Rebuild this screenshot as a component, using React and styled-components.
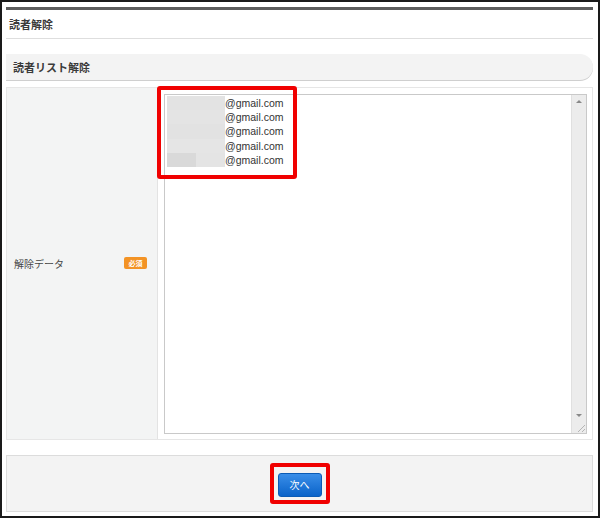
import styled, { createGlobalStyle } from "styled-components";

const GlobalStyle = createGlobalStyle`
  html, body {
    margin: 0;
    padding: 0;
    background: #fff;
  }
  * {
    box-sizing: border-box;
  }
`;

const emails = [
  { id: 1, tone: "#e3e3e3" },
  { id: 2, tone: "#e4e4e4" },
  { id: 3, tone: "#e2e2e2" },
  { id: 4, tone: "#e5e5e5" },
  { id: 5, tone: "#e4e4e4", short: true },
];

function App() {
  return (
    <Frame>
      <GlobalStyle />
      <TopRule />
      <PageTitle>読者解除</PageTitle>
      <SectionHeader>読者リスト解除</SectionHeader>
      <FormRow>
        <LabelCell>
          <span>解除データ</span>
          <Badge>必須</Badge>
        </LabelCell>
        <InputCell>
          <ListBox>
            <ListBody>
              {emails.map(({ id, tone, short }) => (
                <Line key={id}>
                  <Redact tone={tone}>{short && <RedactPart />}</Redact>
                  @gmail.com
                </Line>
              ))}
            </ListBody>
            <ScrollBar>
              <Arrow />
              <Arrow down />
            </ScrollBar>
            <Grip />
          </ListBox>
          <Marker />
        </InputCell>
      </FormRow>
      <Footer>
        <ButtonMark>
          <NextButton type="button">次へ</NextButton>
        </ButtonMark>
      </Footer>
    </Frame>
  );
}
export default App;

const Frame = styled.div`
  width: 600px;
  height: 518px;
  border: 2px solid #1a1a1a;
  padding: 5px 5px 0 4px;
  display: flex;
  flex-direction: column;
  font-family: "Noto Sans CJK JP", "Liberation Sans", sans-serif;
  color: #333;
`;

const TopRule = styled.div`
  height: 3px;
  background: #5c5c5c;
`;

const PageTitle = styled.h1`
  margin: 0;
  height: 29px;
  padding: 0 0 0 3px;
  display: flex;
  align-items: center;
  font-size: 11px;
  font-weight: bold;
  color: #3a3a3a;
  border-bottom: 1px solid #dedede;
`;

const SectionHeader = styled.h2`
  margin: 15px 0 0;
  height: 26px;
  padding: 0 0 0 7px;
  display: flex;
  align-items: center;
  font-size: 11px;
  font-weight: bold;
  color: #3a3a3a;
  background: #f3f3f3;
  border-radius: 0 13px 13px 0;
  box-shadow: 0 1px 0 #cfcfcf;
`;

const FormRow = styled.div`
  margin-top: 7px;
  height: 353px;
  display: flex;
  border: 1px solid #e6e6e6;
`;

const LabelCell = styled.div`
  width: 151px;
  background: #f3f4f4;
  border-right: 1px solid #e3e3e3;
  display: flex;
  align-items: center;
  justify-content: space-between;
  padding: 0 10px 0 7px;
  font-size: 10px;
  color: #444;
`;

const Badge = styled.span`
  width: 23px;
  height: 12px;
  border-radius: 2px;
  background: #f39325;
  color: #fff;
  font-size: 7px;
  font-weight: bold;
  display: flex;
  align-items: center;
  justify-content: center;
  margin-top: -1px;
`;

const InputCell = styled.div`
  flex: 1;
  position: relative;
  padding: 6px 5px 5px 6px;
  background: #fff;
`;

const ListBox = styled.div`
  position: relative;
  height: 100%;
  border: 1px solid #c9c9c9;
  display: flex;
`;

const ListBody = styled.div`
  flex: 1;
  padding: 1px 0 0 2px;
  font-family: "Liberation Sans", "Noto Sans CJK JP", sans-serif;
  font-size: 10.5px;
  color: #333;
`;

const Line = styled.div`
  height: 14.2px;
  display: flex;
  align-items: center;
`;

const Redact = styled.span`
  width: 58px;
  height: 100%;
  background: ${(p) => p.tone};
  display: flex;
`;

const RedactPart = styled.span`
  width: 29px;
  background: #d9d9d9;
`;

const ScrollBar = styled.div`
  width: 15px;
  background: #ececec;
  border-left: 1px solid #e0e0e0;
  display: flex;
  flex-direction: column;
  justify-content: space-between;
  align-items: center;
  padding: 5px 0 16px;
`;

const Arrow = styled.span`
  width: 0;
  height: 0;
  border-left: 3px solid transparent;
  border-right: 3px solid transparent;
  ${(p) =>
    p.down
      ? "border-top: 3px solid #888;"
      : "border-bottom: 3px solid #888;"}
`;

const Grip = styled.span`
  position: absolute;
  right: 1px;
  bottom: 1px;
  width: 7px;
  height: 7px;
  background: linear-gradient(
    135deg,
    transparent 45%,
    #b5b5b5 45%,
    #b5b5b5 55%,
    transparent 55%,
    transparent 75%,
    #b5b5b5 75%,
    #b5b5b5 85%,
    transparent 85%
  );
`;

const Marker = styled.div`
  position: absolute;
  left: -1px;
  top: -2px;
  width: 140px;
  height: 93px;
  border: 4px solid #f00000;
  border-radius: 3px;
  pointer-events: none;
`;

const Footer = styled.div`
  margin-top: 15px;
  height: 57px;
  background: #f3f3f3;
  border: 1px solid #dcdcdc;
  display: flex;
  align-items: center;
  justify-content: center;
`;

const ButtonMark = styled.div`
  border: 4px solid #f00000;
  border-radius: 3px;
  padding: 3px 4px;
`;

const NextButton = styled.button`
  width: 44px;
  height: 24px;
  border: 1px solid #0b5bb5;
  border-radius: 3px;
  background: linear-gradient(#3a8ee8, #0a63c9);
  color: #fff;
  font-family: "Noto Sans CJK JP", sans-serif;
  font-size: 10px;
  padding: 0;
  cursor: pointer;
`;
